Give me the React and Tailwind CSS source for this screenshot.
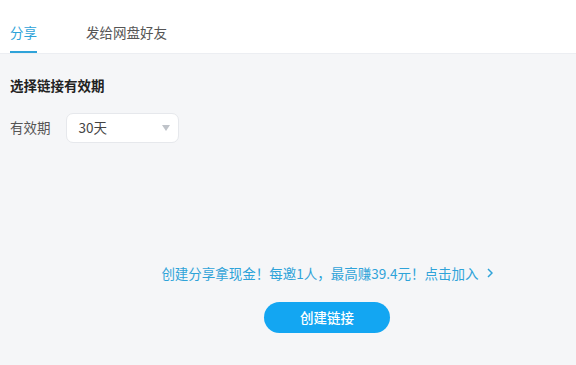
import React from 'react';

const font = { fontFamily: '"Noto Sans CJK SC", "Noto Sans", sans-serif' };

export default function App() {
    return (
        <div className="w-[576px] h-[365px] bg-[#f5f6f8] flex flex-col text-[#333]" style={font}>
            {/* tabs */}
            <div className="h-[54px] bg-white border-b border-[#eceef2] flex items-end px-[10px] gap-[49px] shrink-0">
                <div className="flex flex-col items-center">
                    <span className="text-[13.5px] leading-none text-[#2fa3d9] pb-[12px]">分享</span>
                    <div className="h-[2px] w-[27px] bg-[#2fa3d9]" />
                </div>
                <div className="flex flex-col items-center">
                    <span className="text-[13.5px] leading-none text-[#555] pb-[14px]">发给网盘好友</span>
                </div>
            </div>

            <div className="px-[10px] pt-[25px] flex flex-col">
                <div className="text-[13.5px] font-bold leading-none text-[#222]">选择链接有效期</div>
                <div className="flex items-center mt-[20px] gap-[15px]">
                    <span className="text-[13.5px] text-[#555] leading-none">有效期</span>
                    <div className="w-[113px] h-[30px] bg-white border border-[#e6e8ec] rounded-[7px] flex items-center justify-between pl-[12px] pr-[8px]">
                        <span className="text-[13.5px] text-[#444] leading-none">30天</span>
                        <svg width="8" height="6" viewBox="0 0 8 6">
                            <path d="M0 0 L8 0 L4 6 Z" fill="#bfc3c9" />
                        </svg>
                    </div>
                </div>
            </div>

            <div className="flex flex-col items-center mt-auto pb-[32px] pl-[78px]">
                <div className="flex items-center gap-[8px] text-[13.5px] text-[#2fa3d9] leading-none">
                    <span>创建分享拿现金！每邀1人，最高赚39.4元！点击加入</span>
                    <svg width="6" height="10" viewBox="0 0 6 10">
                        <path d="M1 1 L5 5 L1 9" stroke="#2fa3d9" strokeWidth="1.5" fill="none" />
                    </svg>
                </div>
                <button className="mt-[22px] w-[126px] h-[31px] rounded-full bg-[#13a6f2] text-white text-[13.5px] font-medium">
                    创建链接
                </button>
            </div>
        </div>
    );
}
